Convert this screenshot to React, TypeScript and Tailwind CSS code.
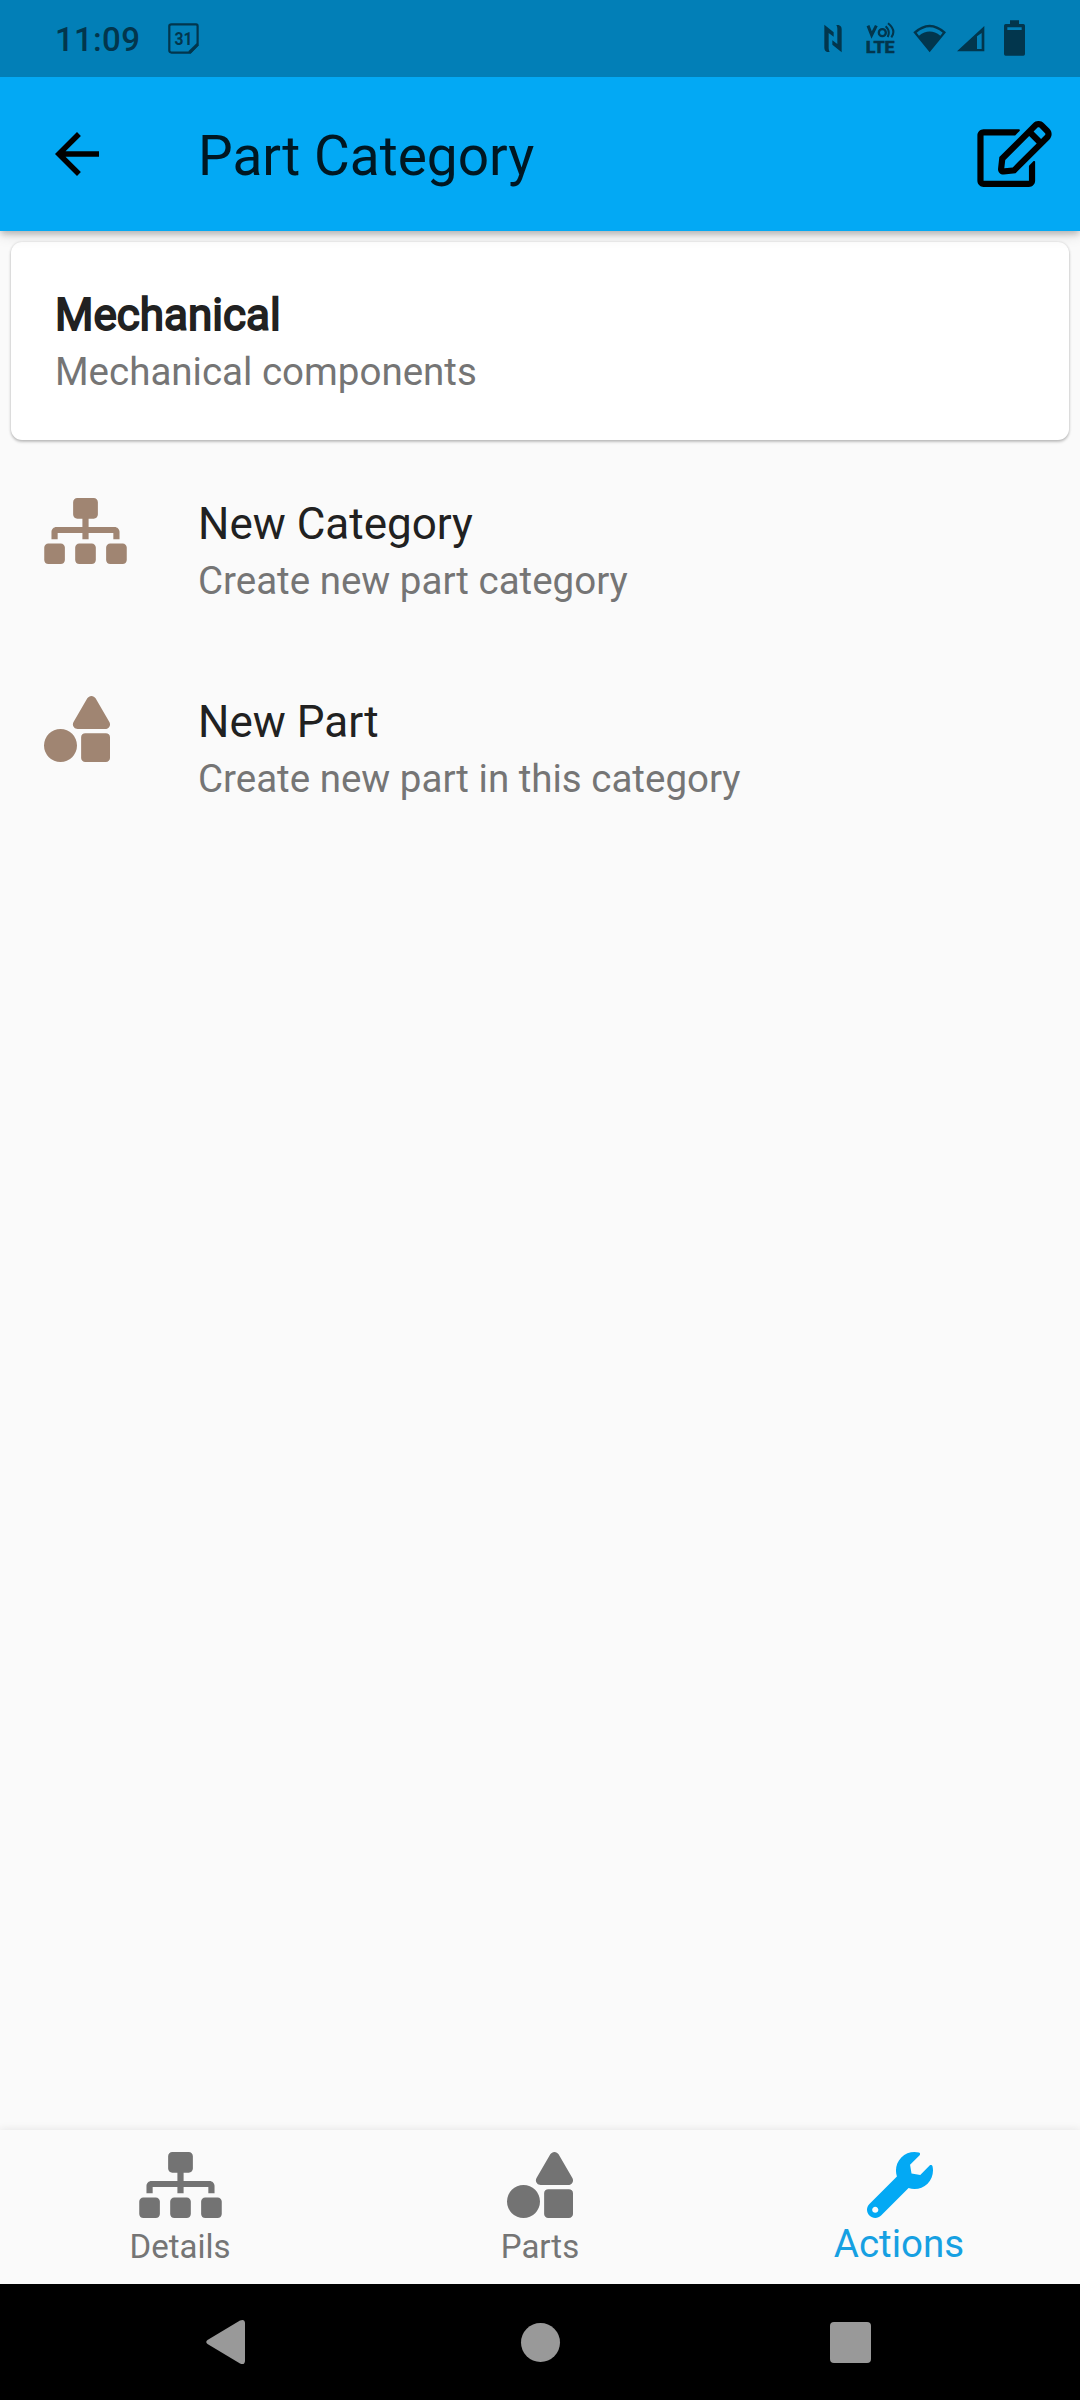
import type { ReactNode } from "react";
import { FaRegEdit, FaShapes, FaSitemap, FaWrench } from "react-icons/fa";
import { MdArrowBack } from "react-icons/md";

function StatusBar() {
  return (
    <div className="relative z-20 flex h-[77px] items-start bg-[#027fb7] px-[55px] pt-5 text-[#02364d]">
      <span className="mt-[2px] w-[113px] text-[33px] font-medium leading-9 tracking-[0.3px]">11:09</span>
      <svg className="h-9 w-8" viewBox="0 0 32 36" fill="none" stroke="currentColor">
        <path d="M3.5 4.4H28Q29.6 4.4 29.6 6V25L22.2 32.6H3.5Q1.3 32.6 1.3 30.5V6Q1.3 4.4 3.5 4.4Z" strokeWidth="2.2" />
        <path d="M29.6 24.2L21.4 32.4" strokeWidth="3" />
        <text x="15.4" y="24.8" textAnchor="middle" fontSize="19" fontWeight="700" textLength="18" lengthAdjust="spacingAndGlyphs" fill="currentColor" stroke="none">
          31
        </text>
      </svg>
      <div className="ml-auto flex">
        <svg className="h-9 w-[18px]" viewBox="132 60 54 108" fill="currentColor">
          <path d="M133 74L161 97V110L146 99V145Q146 151 149 156H142Q133 153 133 143Z" />
          <path d="M185 157L157 134V121L172 132V86Q172 80 169 75H176Q185 78 185 88Z" />
        </svg>
        <svg className="ml-6 h-9 w-[30px]" viewBox="258 60 90 108" fill="currentColor">
          <path d="M264 77L275 105L289 77" fill="none" stroke="currentColor" strokeWidth="9" />
          <circle cx="307" cy="98" r="10.5" fill="none" stroke="currentColor" strokeWidth="7" />
          <path d="M317 79Q332 93 323 111M324 70Q350 91 334 112" fill="none" stroke="currentColor" strokeWidth="6" />
          <text x="257" y="158" fontSize="51" fontWeight="800" textLength="87" lengthAdjust="spacingAndGlyphs" stroke="currentColor" strokeWidth="1.5">
            LTE
          </text>
        </svg>
        <svg className="ml-[17px] h-9 w-[34px]" viewBox="399 60 102 108" fill="currentColor" fillRule="evenodd">
          <path d="M400 97Q449 52 498 97L449 157ZM410 98L417 107Q449 82 481 107L488 98Q449 65 410 98Z" />
        </svg>
        <svg className="ml-[10px] h-9 w-7" viewBox="531 60 84 108" fill="currentColor" fillRule="evenodd">
          <path d="M531 154L613 78V154ZM591 109V147H605V99Z" />
        </svg>
        <svg className="ml-[19px] h-9 w-[21px]" viewBox="672 60 63 108" fill="currentColor" fillRule="evenodd">
          <path d="M690 61H717V72H730Q735 72 735 77V162Q735 167 730 167H677Q672 167 672 162V77Q672 72 677 72H690ZM682 82V90H725V82Z" />
        </svg>
      </div>
    </div>
  );
}

function AppBar() {
  return (
    <header className="relative z-10 flex h-[154px] items-center bg-[#03a9f4] pl-[44px] pr-[28px] shadow-[0_4px_6px_-1px_rgba(0,0,0,0.2),0_3px_14px_rgba(0,0,0,0.14)]">
      <MdArrowBack className="size-[66px] text-black" />
      <h1 className="ml-[88px] pt-[3px] text-[55px] leading-[64px] text-[#001722]">Part Category</h1>
      <FaRegEdit className="ml-auto h-[66px] w-[75px] text-black" />
    </header>
  );
}

function Tile({ icon, title, subtitle }: { icon: ReactNode; title: string; subtitle: string }) {
  return (
    <li className="flex h-[198px] pl-[44px] pt-[47px]">
      <div className="w-[154px]">{icon}</div>
      <div>
        <div className="text-[44px] leading-[52px] text-[#212121]">{title}</div>
        <div className="mt-2 text-[38.5px] leading-[46px] text-[#757575]">{subtitle}</div>
      </div>
    </li>
  );
}

function Tab({ icon, label, active = false }: { icon: ReactNode; label: string; active?: boolean }) {
  return (
    <div className={active ? "flex flex-1 flex-col items-center pt-[22px] text-[#03a9f4]" : "flex flex-1 flex-col items-center pt-[22px] text-[#737373]"}>
      {icon}
      <span className={active ? "mr-[2px] mt-1 text-[38.5px] leading-[44px] text-[#16a0e2]" : "mt-[9px] text-[33px] leading-[40px] text-[#757575]"}>{label}</span>
    </div>
  );
}

export default function App() {
  return (
    <div className="flex h-[2400px] w-[1080px] flex-col overflow-hidden bg-[#fafafa] font-['Roboto',sans-serif]">
      <StatusBar />
      <AppBar />
      <main className="flex-1">
        <section className="m-[11px] h-[198px] rounded-[11px] bg-white pl-[44px] pt-[47px] shadow-[0_2px_3px_rgba(0,0,0,0.22),0_0_3px_rgba(0,0,0,0.14)]">
          <h2 className="text-[44px] font-normal leading-[52px] text-[#212121] [-webkit-text-stroke:1.8px_#212121]">Mechanical</h2>
          <p className="mt-2 text-[38.5px] leading-[46px] text-[#757575]">Mechanical components</p>
        </section>
        <ul>
          <Tile
            icon={<FaSitemap className="h-[66px] w-[83px] text-[#a08572]" />}
            title="New Category"
            subtitle="Create new part category"
          />
          <Tile
            icon={<FaShapes className="size-[66px] text-[#a08572]" />}
            title="New Part"
            subtitle="Create new part in this category"
          />
        </ul>
      </main>
      <nav className="flex h-[154px] bg-[#fafafa] shadow-[0_-1px_8px_rgba(0,0,0,0.08)]">
        <Tab icon={<FaSitemap className="h-[66px] w-[83px]" />} label="Details" />
        <Tab icon={<FaShapes className="size-[66px]" />} label="Parts" />
        <Tab icon={<FaWrench className="size-[66px]" />} label="Actions" active />
      </nav>
      <div className="z-10 flex h-[116px] items-center bg-black pl-[206px] text-[#999999]">
        <svg className="h-[46px] w-[39px]" viewBox="0 0 39 46" fill="currentColor">
          <path d="M1.5 21L34 1.5Q38.7 -0.5 39 4V42Q38.7 46.5 34 44.5L1.5 25Q-1 23 1.5 21Z" />
        </svg>
        <div className="ml-[276px] size-[39px] rounded-full bg-[#999999]" />
        <div className="ml-[270px] size-[41px] rounded-[4px] bg-[#999999]" />
      </div>
    </div>
  );
}
